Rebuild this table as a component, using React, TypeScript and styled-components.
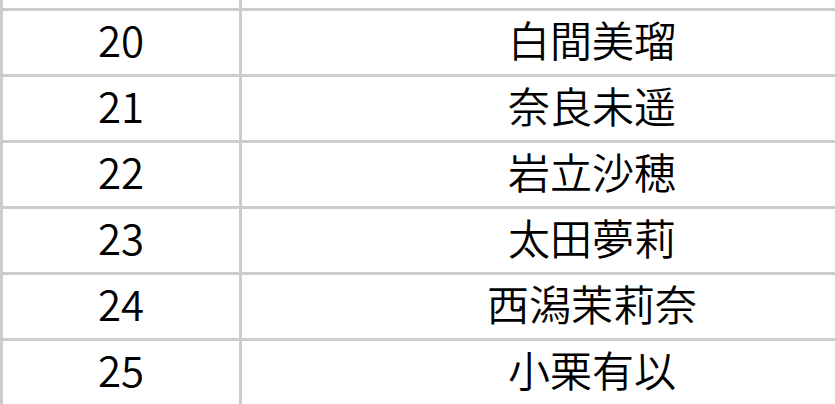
import React from "react";
import styled, { createGlobalStyle } from "styled-components";

const Global = createGlobalStyle`
  html, body {
    margin: 0;
    padding: 0;
    background: #ffffff;
    overflow: hidden;
  }
  body {
    font-family: "Noto Sans CJK JP", "Noto Sans", sans-serif;
  }
`;

const Table = styled.div`
  display: flex;
  flex-direction: column;
  width: max-content;
  border-left: 3px solid #cccccc;
`;

const Row = styled.div<{ $h?: number }>`
  display: grid;
  grid-template-columns: 239px 703px;
  border-bottom: 3px solid #cccccc;
  height: ${(p) => p.$h ?? 63}px;
`;

const Cell = styled.div`
  box-sizing: border-box;
  padding-bottom: 8px;
  line-height: 55px;
  text-align: center;
  color: #000000;
  font-size: 42px;
  font-weight: 350;
  border-right: 3px solid #cccccc;
  font-family: "Noto Sans CJK JP", sans-serif;
  white-space: nowrap;
`;

const rows: [number, string][] = [
  [20, "白間美瑠"],
  [21, "奈良未遥"],
  [22, "岩立沙穂"],
  [23, "太田夢莉"],
  [24, "西潟茉莉奈"],
  [25, "小栗有以"],
];

export default function App() {
  return (
    <>
      <Global />
      <Table>
        <Row $h={8}>
          <Cell />
          <Cell />
        </Row>
        {rows.map(([n, name]) => (
          <Row key={n}>
            <Cell>{n}</Cell>
            <Cell>{name}</Cell>
          </Row>
        ))}
      </Table>
    </>
  );
}
